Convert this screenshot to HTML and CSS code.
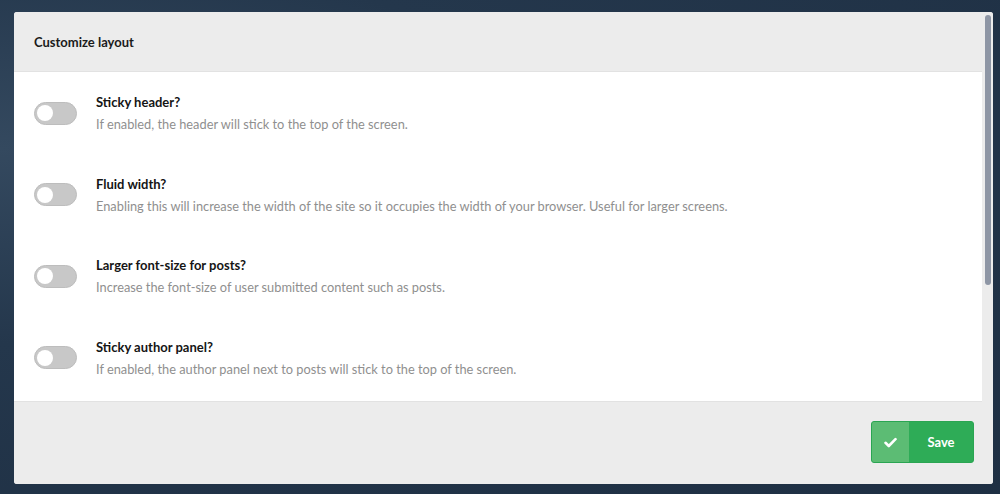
FILE: index.html
```html
<!DOCTYPE html>
<html lang="en">
<head>
<meta charset="utf-8">
<title>Customize layout</title>
<link rel="stylesheet" href="styles.css">
</head>
<body>
<div class="modal">
  <div class="main">
    <div class="header"><h2 class="title">Customize layout</h2></div>
    <div class="content">
      <div class="row">
        <span class="toggle"><span class="knob"></span></span>
        <div class="text">
          <div class="label">Sticky header?</div>
          <div class="desc">If enabled, the header will stick to the top of the screen.</div>
        </div>
      </div>
      <div class="row">
        <span class="toggle"><span class="knob"></span></span>
        <div class="text">
          <div class="label">Fluid width?</div>
          <div class="desc">Enabling this will increase the width of the site so it occupies the width of your browser. Useful for larger screens.</div>
        </div>
      </div>
      <div class="row">
        <span class="toggle"><span class="knob"></span></span>
        <div class="text">
          <div class="label">Larger font-size for posts?</div>
          <div class="desc">Increase the font-size of user submitted content such as posts.</div>
        </div>
      </div>
      <div class="row">
        <span class="toggle"><span class="knob"></span></span>
        <div class="text">
          <div class="label">Sticky author panel?</div>
          <div class="desc">If enabled, the author panel next to posts will stick to the top of the screen.</div>
        </div>
      </div>
    </div>
    <div class="footer">
      <button class="save">
        <span class="save-icon"><svg width="13" height="11" viewBox="0 0 13 11"><path d="M1.5 5.8 L4.8 9 L11.5 2.2" fill="none" stroke="#fff" stroke-width="2.6" stroke-linecap="round" stroke-linejoin="round"/></svg></span>
        <span class="save-text">Save</span>
      </button>
    </div>
  </div>
  <div class="track"><div class="thumb"></div></div>
</div>
</body>
</html>
```
FILE: styles.css
```css
* { box-sizing: border-box; }
html, body { height: 100%; }
body {
  margin: 0;
  background: radial-gradient(ellipse at 0% 30%, #34495f 0%, #24374c 40%, #1e2f43 100%);
  font-family: "Lato", "Open Sans", sans-serif;
  padding: 12px 7px 10px 14px;
  overflow: hidden;
}
.modal {
  display: flex;
  width: 979px;
  height: 472px;
  border-radius: 3px;
  overflow: hidden;
  background: #ececec;
}
.main {
  flex: 1;
  display: flex;
  flex-direction: column;
}
.header {
  height: 60px;
  background: #ececec;
  border-bottom: 1px solid #e2e2e2;
  display: flex;
  align-items: center;
  padding: 0 20px;
}
.title {
  margin: 0;
  font-size: 13px;
  font-weight: 700;
  color: #1b1b1b;
  padding-top: 1px;
}
.content {
  height: 329px;
  background: #fff;
  padding: 19px 20px 0;
  display: flex;
  flex-direction: column;
  gap: 37px;
  overflow: hidden;
}
.row {
  display: flex;
  align-items: center;
  gap: 19px;
  height: 44.5px;
}
.toggle {
  flex: none;
  width: 43px;
  height: 23px;
  border-radius: 12px;
  background: #c8c8c8;
  border: 1px solid #bdbdbd;
  display: flex;
  align-items: center;
  padding-left: 2px;
}
.knob {
  width: 16px;
  height: 16px;
  border-radius: 50%;
  background: #fff;
}
.text { display: flex; flex-direction: column; gap: 4px; }
.label {
  font-size: 13px;
  font-weight: 700;
  color: #151515;
  line-height: 18px;
}
.desc {
  font-size: 12.8px;
  color: #8f8f8f;
  line-height: 18px;
}
.footer {
  flex: 1;
  border-top: 1px solid #e2e2e2;
  background: #ececec;
  display: flex;
  justify-content: flex-end;
  align-items: flex-start;
  padding: 19px 8px 0 0;
}
.save {
  display: flex;
  height: 42px;
  width: 103px;
  padding: 0;
  border: 1px solid #2aa552;
  border-radius: 3px;
  overflow: hidden;
  background: #2eac57;
  cursor: pointer;
  font-family: inherit;
}
.save-icon {
  width: 37px;
  background: #5cbc74;
  display: flex;
  align-items: center;
  justify-content: center;
}
.save-text {
  flex: 1;
  display: flex;
  align-items: center;
  justify-content: center;
  color: #fff;
  font-weight: 700;
  font-size: 13px;
}
.track {
  width: 11px;
  background: #ececec;
  padding: 3px 2px 0 3px;
}
.thumb {
  width: 6px;
  height: 270px;
  border-radius: 3px;
  background: #8e96a5;
}
```
